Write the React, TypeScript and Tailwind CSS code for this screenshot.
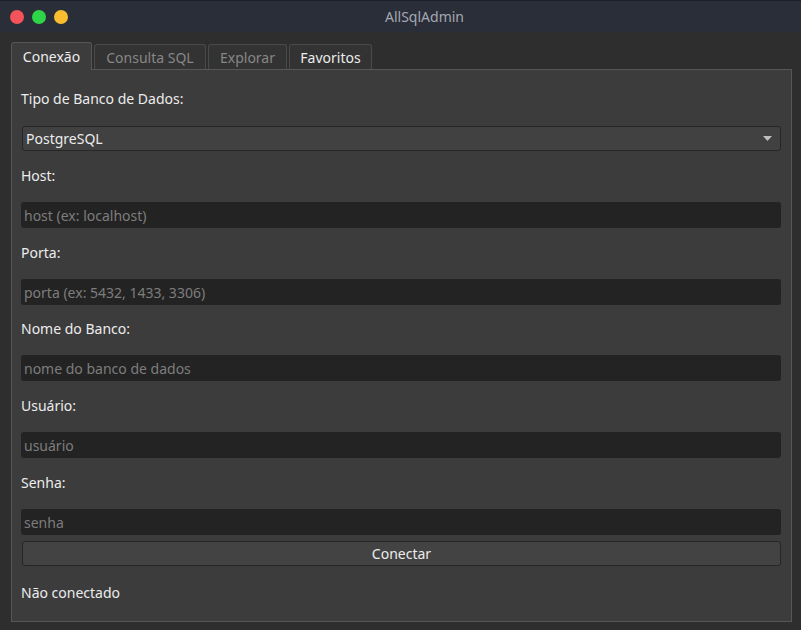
import React, { useState } from "react";

// campos do formulario de conexao
const fields = [
  { label: "Host:", placeholder: "host (ex: localhost)" },
  { label: "Porta:", placeholder: "porta (ex: 5432, 1433, 3306)" },
  { label: "Nome do Banco:", placeholder: "nome do banco de dados" },
  { label: "Usuário:", placeholder: "usuário" },
  { label: "Senha:", placeholder: "senha" },
];

const tabs = [
  { name: "Conexão", w: "w-[81px]", text: "text-[#ececec]" },
  { name: "Consulta SQL", w: "w-[112px]", text: "text-[#878787]" },
  { name: "Explorar", w: "w-[79px]", text: "text-[#878787]" },
  { name: "Favoritos", w: "w-[83px]", text: "text-[#ececec]" },
];

const App = () => {
  const [active, setActive] = useState(0);

  return (
    <div
      className="w-[801px] h-[630px] bg-[#2e2e2e] flex flex-col overflow-hidden text-[14px]"
      style={{ fontFamily: '"Noto Sans", "Open Sans", sans-serif' }}
    >
      {/* barra de titulo */}
      <div className="h-[32px] bg-[#2a2e38] border-t border-[#1c1f25] flex items-center relative shrink-0">
        <div className="flex gap-[8px] pl-[10px]">
          <span className="w-[14px] h-[14px] rounded-full bg-[#f3535b]" />
          <span className="w-[14px] h-[14px] rounded-full bg-[#2ed549]" />
          <span className="w-[14px] h-[14px] rounded-full bg-[#fbbd2f]" />
        </div>
        <div className="flex-1 flex justify-center pr-[20px] text-[#a3a8b3]">AllSqlAdmin</div>
      </div>

      {/* abas */}
      <div className="flex items-end gap-[2px] pl-[11px] mt-[9px] h-[28px] shrink-0">
        {tabs.map((t, i) => (
          <button
            key={t.name}
            onClick={() => setActive(i)}
            className={
              i === active
                ? `${t.w} h-[28px] -mb-px relative z-10 bg-[#3c3c3c] border border-b-0 border-[#575757] rounded-t-[3px] ${t.text}`
                : `${t.w} h-[25px] bg-[#333333] border border-b-0 border-[#4a4a4a] rounded-t-[3px] ${t.text}`
            }
          >
            {t.name}
          </button>
        ))}
      </div>

      {/* painel */}
      <div className="mx-[11px] w-[781px] h-[553px] bg-[#3c3c3c] border border-[#575757] px-[9px] pt-[19px] flex flex-col text-[#ececec]">
        <div className="h-[20px] leading-[20px]">Tipo de Banco de Dados:</div>
        <div className="mt-[17px] ml-px h-[25px] w-[759px] rounded-[3px] border border-[#262626] bg-[#414141] flex items-center justify-between pl-[3px] pr-[8px]">
          <span>PostgreSQL</span>
          <svg width="9" height="6" viewBox="0 0 9 6">
            <path d="M0 0 H9 L4.5 5 Z" fill="#bdbdbd" />
          </svg>
        </div>

        {fields.map((f, i) => (
          <div key={f.label} className="flex flex-col">
            <div className={`h-[20px] leading-[20px] ${i === 2 ? "mt-[14px]" : "mt-[15px]"}`}>{f.label}</div>
            <input
              type={f.label === "Senha:" ? "password" : "text"}
              placeholder={f.placeholder}
              className="mt-[16px] h-[26px] w-[760px] rounded-[3px] bg-[#232323] px-[3px] text-[#ececec] placeholder:text-[#7d7d7d] outline-none"
            />
          </div>
        ))}

        <button className="mt-[6px] ml-px h-[25px] w-[759px] rounded-[3px] border border-[#262626] bg-[#434343] text-[#ececec]">
          Conectar
        </button>

        <div className="mt-[17px] h-[20px] leading-[20px]">Não conectado</div>
      </div>
    </div>
  );
};

export default App;
